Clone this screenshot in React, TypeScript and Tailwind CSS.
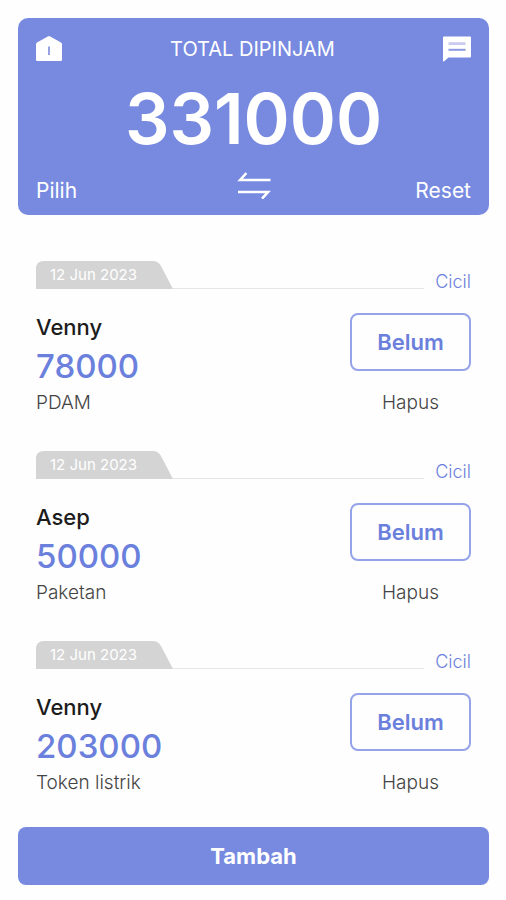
interface Loan {
  id: number;
  date: string;
  name: string;
  amount: number;
  note: string;
}

const loans: Loan[] = [
  { id: 1, date: "12 Jun 2023", name: "Venny", amount: 78000, note: "PDAM" },
  { id: 2, date: "12 Jun 2023", name: "Asep", amount: 50000, note: "Paketan" },
  { id: 3, date: "12 Jun 2023", name: "Venny", amount: 203000, note: "Token listrik" },
];

function HomeIcon() {
  return (
    <svg className="w-[26px] h-[26px]" viewBox="0 0 26 26" fill="none" aria-hidden="true">
      <path d="M11.8 0.4Q13 -0.4 14.2 0.4L25 6.6Q26 7.2 26 8.4V23.8Q26 25 24.8 25H1.2Q0 25 0 23.8V8.4Q0 7.2 1 6.6Z" fill="#fff" />
      <path d="M13 10.5v8.5" stroke="#8e98dd" strokeWidth="1.8" />
    </svg>
  );
}

function MessageIcon() {
  return (
    <svg className="w-7 h-[26px]" viewBox="0 0 28 26" fill="none" aria-hidden="true">
      <path d="M1 0.5H27Q28 0.5 28 1.5V20.5Q28 21.5 27 21.5H5.5L1.2 25.2Q0 26 0 24.6V1.5Q0 0.5 1 0.5Z" fill="#fff" />
      <path d="M5.5 7.6h17" stroke="#c9cbef" strokeWidth="2.8" />
      <path d="M5.5 13.8h17" stroke="#8d99e0" strokeWidth="2" />
    </svg>
  );
}

function SwapIcon() {
  return (
    <svg className="w-[34px] h-7" viewBox="0 0 34 28" fill="none" stroke="#fff" strokeWidth="2.6" aria-hidden="true">
      <path d="M33.5 9H3.2L9.4 2" />
      <path d="M1 21H31L25 27.6" />
    </svg>
  );
}

function LoanItem({ loan }: { loan: Loan }) {
  return (
    <li>
      {/* Date tab */}
      <div className="flex items-end h-7">
        <div className="grid w-[137px] h-7 items-center">
          <svg className="col-start-1 row-start-1 w-[137px] h-7" viewBox="0 0 137 28" aria-hidden="true">
            <path d="M0 28V8Q0 0 8 0H117Q122 0 125 5L137 28Z" fill="#d4d4d4" />
          </svg>
          <time className="col-start-1 row-start-1 pl-[14px] text-[15px] leading-7 text-white">{loan.date}</time>
        </div>
        <div className="flex-1 border-b border-[#e6e6e6]" />
        <button type="button" className="ml-[11px] text-lg leading-[14px] font-light text-[#6b80dc]">
          Cicil
        </button>
      </div>

      <div className="flex justify-between mt-6">
        <div>
          <h2 className="text-[22px] leading-7 font-medium text-[#1c1c1c]">{loan.name}</h2>
          <p className="text-[33px] leading-[50px] font-medium text-[#6b80dc]">{loan.amount}</p>
          <p className="text-[19px] leading-6 font-light text-[#444]">{loan.note}</p>
        </div>
        <div className="flex flex-col justify-between items-center w-[121px]">
          <button
            type="button"
            className="w-full h-[58px] rounded-lg border-2 border-[#95a3e8] text-[22px] font-semibold text-[#6b80dc]"
          >
            Belum
          </button>
          <button type="button" className="text-[19px] leading-6 font-light text-[#444]">
            Hapus
          </button>
        </div>
      </div>
    </li>
  );
}

export default function App() {
  const total = loans.reduce((sum, loan) => sum + loan.amount, 0);

  return (
    <main className="min-h-screen bg-[#fefefe] pt-[18px] pb-4 pl-[18px] pr-[17px] font-['Inter',sans-serif]">
      {/* Total */}
      <header className="rounded-[10px] bg-[#778ae0] px-[18px] pt-[17px] pb-3 text-white">
        <div className="flex items-center justify-between h-7">
          <button type="button" aria-label="Beranda">
            <HomeIcon />
          </button>
          <h1 className="text-xl">TOTAL DIPINJAM</h1>
          <button type="button" aria-label="Pesan">
            <MessageIcon />
          </button>
        </div>
        <p className="mt-4 text-center text-[70px] leading-20 font-semibold">{total}</p>
        <div className="grid grid-cols-3 items-end mt-3 h-8">
          <button type="button" className="justify-self-start text-[21px] leading-6">
            Pilih
          </button>
          <button type="button" className="justify-self-center self-start" aria-label="Tukar">
            <SwapIcon />
          </button>
          <button type="button" className="justify-self-end text-[21px] leading-6">
            Reset
          </button>
        </div>
      </header>

      {/* Loans */}
      <ul className="flex flex-col gap-9 mt-[46px] px-[18px]">
        {loans.map((loan) => (
          <LoanItem key={loan.id} loan={loan} />
        ))}
      </ul>

      <button type="button" className="mt-8 w-full h-[58px] rounded-lg bg-[#778ae0] text-[22px] font-bold text-white">
        Tambah
      </button>
    </main>
  );
}
